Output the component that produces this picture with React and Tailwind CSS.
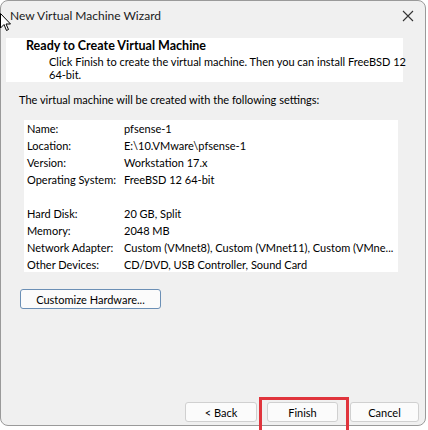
import React from "react";

const rows = [
  ["Name:", "pfsense-1"],
  ["Location:", "E:\\10.VMware\\pfsense-1"],
  ["Version:", "Workstation 17.x"],
  ["Operating System:", "FreeBSD 12 64-bit"],
  ["", ""],
  ["Hard Disk:", "20 GB, Split"],
  ["Memory:", "2048 MB"],
  ["Network Adapter:", "Custom (VMnet8), Custom (VMnet11), Custom (VMne..."],
  ["Other Devices:", "CD/DVD, USB Controller, Sound Card"],
];

export default function App() {
  const font = { fontFamily: 'Lato, "Noto Sans", sans-serif' };
  return (
    <div className="relative w-[428px] h-[430px] bg-white overflow-hidden text-[11px] text-[#000]" style={font}>
      <div className="absolute left-0 top-0 w-[426px] h-[426px] border border-[#9a9a9a] rounded-lg bg-[#f0f0f0] flex flex-col">
        {/* Title bar */}
        <div className="h-[30px] flex items-center justify-between pl-[9px] pr-[8px]">
          <span className="text-[12px] text-[#1a1a1a]">New Virtual Machine Wizard</span>
          <svg width="12" height="12" viewBox="0 0 12 12" className="mr-[3px]">
            <path d="M1 1 L11 11 M11 1 L1 11" stroke="#333" strokeWidth="1.1" fill="none" />
          </svg>
        </div>
        {/* Header */}
        <div className="mt-[7px] ml-[5px] w-[397px] h-[44px] bg-white pl-[20px]">
          <div className="font-bold leading-[15px] text-[12.5px]">Ready to Create Virtual Machine</div>
          <div className="pl-[23px] leading-[13px] mt-[2px] whitespace-nowrap">
            Click Finish to create the virtual machine. Then you can install FreeBSD 12
            <br />
            64-bit.
          </div>
        </div>
        <div className="mt-[11px] ml-[18px] leading-[14px]">
          The virtual machine will be created with the following settings:
        </div>
        {/* Settings box */}
        <div className="mt-[13px] ml-[23px] w-[374px] h-[152px] bg-white pt-[1px] pl-[3px] overflow-hidden">
          {rows.map(([k, v], i) => (
            <div key={i} className="flex h-[17px] items-center whitespace-nowrap">
              <span className="w-[97px] shrink-0">{k}</span>
              <span>{v}</span>
            </div>
          ))}
        </div>
        <div className="mt-[17px] ml-[19px]">
          <button className="w-[141px] h-[20px] border border-[#6b8fb5] rounded-[3px] bg-[#fbfbfb] flex items-center justify-center leading-none">
            Customize Hardware...
          </button>
        </div>
        <div className="flex-1" />
        {/* Bottom buttons */}
        <div className="flex items-start justify-end pr-[6px] mb-[3px] h-[20px]">
          <button className="w-[72px] h-[20px] border border-[#d0d0d0] rounded-[3px] bg-[#fbfbfb] flex items-center justify-center leading-none">
            &lt; Back
          </button>
          <button className="ml-[10px] w-[71px] h-[20px] border border-[#d0d0d0] rounded-[3px] bg-[#fbfbfb] flex items-center justify-center leading-none">
            Finish
          </button>
          <button className="ml-[12px] w-[69px] h-[20px] border border-[#d0d0d0] rounded-[3px] bg-[#fbfbfb] flex items-center justify-center leading-none">
            Cancel
          </button>
        </div>
      </div>
      {/* red annotation box */}
      <div className="absolute left-[259px] top-[397px] w-[90px] h-[40px] border-[3px] border-[#e0343c]" />
      {/* mouse cursor */}
      <svg className="absolute left-0 top-[13px]" width="12" height="19" viewBox="0 0 12 19">
        <path d="M0.5 0.5 L0.5 15 L4 11.5 L6.5 17.5 L8.5 16.5 L6 11 L10.5 11 Z" fill="#fff" stroke="#000" strokeWidth="1" strokeLinejoin="round" />
      </svg>
    </div>
  );
}
